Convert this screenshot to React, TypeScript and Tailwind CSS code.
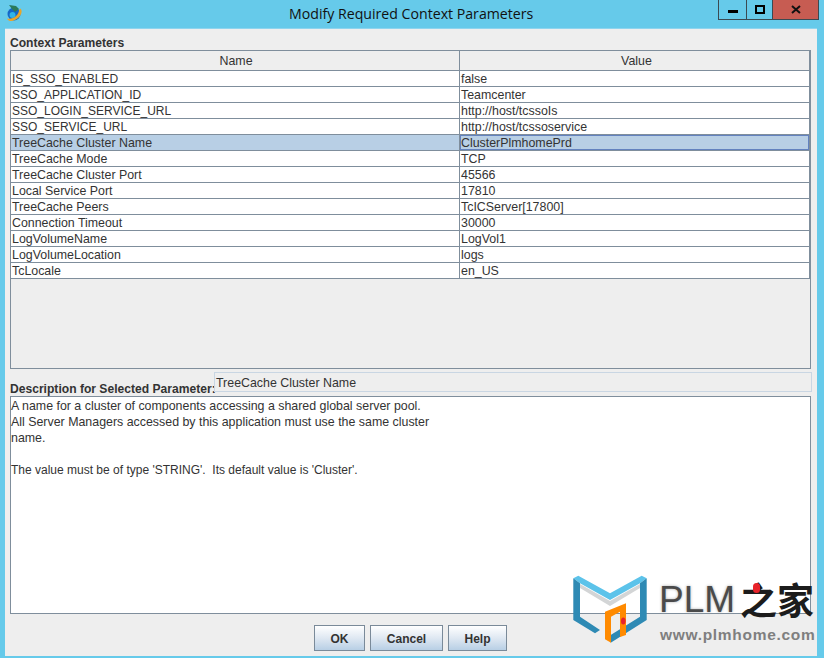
const ROWS = [
  ["IS_SSO_ENABLED", "false"],
  ["SSO_APPLICATION_ID", "Teamcenter"],
  ["SSO_LOGIN_SERVICE_URL", "http://host/tcssoIs"],
  ["SSO_SERVICE_URL", "http://host/tcssoservice"],
  ["TreeCache Cluster Name", "ClusterPlmhomePrd"],
  ["TreeCache Mode", "TCP"],
  ["TreeCache Cluster Port", "45566"],
  ["Local Service Port", "17810"],
  ["TreeCache Peers", "TcICServer[17800]"],
  ["Connection Timeout", "30000"],
  ["LogVolumeName", "LogVol1"],
  ["LogVolumeLocation", "logs"],
  ["TcLocale", "en_US"],
];

function AppIcon() {
  return (
    <svg width="18" height="18" viewBox="0 0 18 18" className="ml-[6px] mt-[4px]">
      <circle cx="8" cy="10" r="6.5" fill="#1467c8" />
      <circle cx="6.5" cy="11" r="3" fill="#2fb4e8" />
      <path d="M3 1 L10 2 L13 5 L9 8 L6 5 Z" fill="#2b7a5a" />
      <path d="M1 14.5 C7 16 13 11 13 6 L14.5 4.5 C18 8 13 16 6 17 C4 17.3 2 16.5 1 14.5 Z" fill="#e8a52a" />
    </svg>
  );
}

function Logo() {
  return (
    <div className="absolute left-[572px] top-[574px] w-[250px] h-[72px]">
      <svg width="76" height="70" viewBox="0 0 76 70" className="absolute left-0 top-0">
        <path d="M8 10 L38 27 L68 10 L68 14 L38 32 L8 14 Z" fill="#d3d5d6" />
        <path d="M1.3 4.3 L6.3 1.7 L38 19.3 L69.7 1.7 L74.7 4.3 L68 9.3 L38 26 L8 9.3 Z" fill="#5cc3ea" />
        <path d="M1.3 4.3 L8 9.3 L8 42.7 L28 56 L23 59.3 L1.3 46 Z" fill="#2e8ab4" />
        <path d="M74.7 4.3 L68 9.3 L68 42.7 L38.7 61 L38.7 68.7 L74.7 46 Z" fill="#2e8ab4" />
        <path d="M33 37.7 L54 29.3 L54 61 L48 63 L48 37.7 L39 42.7 L39 68.7 L33 65.3 Z" fill="#ff8a00" />
        <ellipse cx="51.3" cy="47" rx="2.3" ry="3.5" fill="#e8232a" />
      </svg>
      <div className="absolute left-[87px] top-[3px] text-[37px] leading-[46px] text-[#4a4a4a] font-['Liberation_Sans',sans-serif] [text-shadow:0_0_3px_#aaaaaa]">
        PLM
      </div>
      <div className="absolute left-[168px] top-[1px] text-[37px] leading-[48px] font-bold text-[#1c1c1c] font-['Noto_Sans_CJK_SC',sans-serif]">
        之家
      </div>
      <span className="absolute left-[181px] top-[9px] w-[7px] h-[10px] rounded-full bg-[#e8232a]" />
      <div className="absolute left-[88px] top-[52px] text-[15.5px] leading-[18px] font-bold tracking-[0.7px] text-[#7f7f7f] font-['Liberation_Sans',sans-serif]">
        www.plmhome.com
      </div>
    </div>
  );
}

function DialogButton({ label, width }: { label: string; width: string }) {
  return (
    <button
      className={`${width} h-[26px] pt-[1px] border border-[#7a8a99] bg-gradient-to-b from-[#ffffff] via-[#dfe8f2] to-[#b8cfe5] text-[12px] font-bold text-[#333333]`}
    >
      {label}
    </button>
  );
}

export default function App() {
  return (
    <div className="relative w-[824px] h-[658px] overflow-hidden bg-[#66caea] font-['Liberation_Sans',sans-serif] text-[12.4px] text-[#333333]">
      {/* Title bar */}
      <div className="relative h-[28px] flex">
        <AppIcon />
        <div className="absolute left-[289px] top-[4px] text-[14.15px] leading-[20px] text-[#111111] font-['Open_Sans',sans-serif]">
          Modify Required Context Parameters
        </div>
        <div className="absolute left-[718px] top-0 flex h-[20px] border border-t-0 border-[#3b4a52]">
          <div className="w-[28px] flex items-center justify-center border-r border-[#3b4a52]">
            <span className="mt-[4px] w-[10px] h-[3px] bg-black" />
          </div>
          <div className="w-[25px] flex items-center justify-center">
            <span className="w-[10px] h-[9px] border-2 border-black" />
          </div>
          <div className="w-[46px] flex items-center justify-center bg-[#c75c52] border-l border-[#3b4a52]">
            <svg width="10" height="9" viewBox="0 0 10 9">
              <path d="M1 1 L9 8 M9 1 L1 8" stroke="#111111" strokeWidth="2" />
            </svg>
          </div>
        </div>
      </div>

      {/* Dialog body */}
      <div className="ml-[5px] w-[812px] h-[628px] bg-[#eeeeee] border-t border-[#8fd4ee] px-[5px] flex flex-col">
        <div className="h-[21px] pt-[7px] text-[12.1px] leading-[14px] font-bold">Context Parameters</div>

        {/* Table */}
        <div className="w-[801px] h-[319px] border border-[#7f8e9c]">
          <div className="flex h-[20px] border-b border-r border-[#7f8e9c] bg-[#eeeeee] leading-[21px] text-center">
            <div className="w-[449px] border-r border-[#7f8e9c] pl-[2px]">Name</div>
            <div className="flex-1 pl-[4px]">Value</div>
          </div>
          {ROWS.map(([name, value]) => {
            const selected = name === "TreeCache Cluster Name";
            const upper = name === name.toUpperCase();
            return (
              <div
                key={name}
                className={`flex h-[16px] border-b border-r border-[#7f8e9c] leading-[17px] ${selected ? "bg-[#b8cfe5]" : "bg-white"}`}
              >
                <div className={`w-[449px] border-r border-[#7f8e9c] pl-[1px] ${upper ? "text-[12px]" : ""}`}>{name}</div>
                <div className={`flex-1 ${selected ? "border border-[#6382bf] leading-[15px]" : "pl-[1px]"}`}>{value}</div>
              </div>
            );
          })}
        </div>

        {/* Description */}
        <div className="mt-[3px] flex h-[24px]">
          <div className="w-[204px] pt-[10px] text-[12.1px] leading-[14px] font-bold whitespace-nowrap">
            Description for Selected Parameter:
          </div>
          <div className="w-[598px] h-[20px] border border-[#c9d6e3] pl-[1px] leading-[20px]">
            TreeCache Cluster Name
          </div>
        </div>
        <div className="w-[801px] h-[218px] border border-[#7f8e9c] bg-white pt-[1px] leading-[16px]">
          <div>A name for a cluster of components accessing a shared global server pool.</div>
          <div>All Server Managers accessed by this application must use the same cluster</div>
          <div>name.</div>
          <div className="h-[16px]" />
          <div className="text-[12px]">The value must be of type 'STRING'.&nbsp; Its default value is 'Cluster'.</div>
        </div>

        {/* Buttons */}
        <div className="mt-[11px] ml-[304px] flex gap-[5px]">
          <DialogButton label="OK" width="w-[51px]" />
          <DialogButton label="Cancel" width="w-[73px]" />
          <DialogButton label="Help" width="w-[59px]" />
        </div>
      </div>

      <Logo />
    </div>
  );
}
